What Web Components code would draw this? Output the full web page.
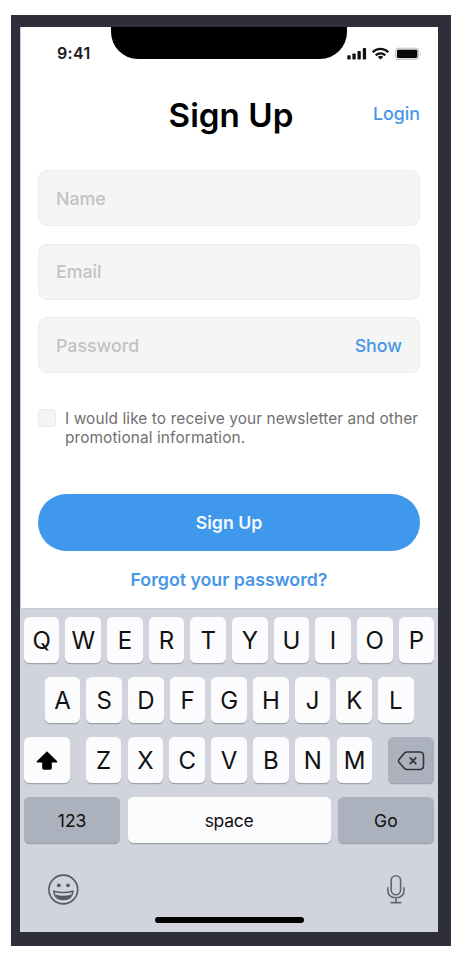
<!DOCTYPE html>
<html lang="en">
<head>
<meta charset="utf-8">
<title>Sign Up</title>
<style>
html,body{margin:0;background:#fff}
body{width:462px;height:960px;overflow:hidden;font-family:Inter,"Liberation Sans",sans-serif;color:#000}
</style>
</head>
<body>
<phone-frame>
  <status-bar time="9:41"></status-bar>
  <sign-up-form></sign-up-form>
  <key-board></key-board>
</phone-frame>
<script>
function define(name, render) {
  customElements.define(name, class extends HTMLElement {
    connectedCallback() {
      if (this.shadowRoot) return;
      this.attachShadow({ mode: 'open' }).innerHTML = '<style>*{box-sizing:border-box}</style>' + render(this);
    }
  });
}

define('phone-frame', () => `
<style>
:host{display:block;box-sizing:border-box;width:462px;height:960px;padding:15px 11.5px 14px 11px}
.bezel{height:931px;background:#2e2f3a;padding:12px 12.5px 14px 9px}
.screen{height:905px;background:#fff;display:flex;flex-direction:column;box-shadow:inset 1px 0 #c9cbd6;overflow:hidden}
</style>
<div class="bezel"><div class="screen"><slot></slot></div></div>`);

define('status-bar', el => `
<style>
:host{display:grid;grid-template-columns:91px 236px 1fr;height:60px;flex:none}
.time{font-size:16px;font-weight:600;letter-spacing:.35px;line-height:20px;padding:16px 0 0 37px;color:#1b1b1b;white-space:nowrap}
.notch{height:31.5px;background:#000;border-radius:0 0 27px 27px}
.icons{padding-top:18.5px}
svg{display:block}
</style>
<div class="time">${el.getAttribute('time')}</div>
<div class="notch"></div>
<div class="icons"><svg width="76" height="15" viewBox="0 0 76 15">
<g fill="#111"><rect x=".3" y="9.3" width="3.3" height="4.3" rx=".8"/><rect x="5.4" y="7.5" width="3.3" height="6.1" rx=".8"/><rect x="10.5" y="5" width="3.3" height="8.6" rx=".8"/><rect x="15.8" y="2" width="3.3" height="11.6" rx=".8"/></g>
<g fill="none" stroke="#111" stroke-width="2.2"><path d="M25.7 6.200a11 11 0 0 1 15.600 0"/><path d="M28.700 9.400a6.800 6.800 0 0 1 9.600 0"/></g>
<path d="M33.500 13.600 30.800 11a3.900 3.900 0 0 1 5.400 0z" fill="#111"/>
<rect x="48.600" y="2.200" width="23" height="11.200" rx="2.600" fill="#e4e4e4" stroke="#c2c2c2"/>
<rect x="50" y="3.800" width="20.300" height="8.200" rx="1.400" fill="#080808"/>
<path d="M73 6v3.800q1.700-1.900 0-3.800" fill="#aaa"/>
</svg></div>`);

define('text-field', el => `
<style>
:host{display:flex;box-sizing:border-box;align-items:center;justify-content:space-between;height:56px;border:1.4px solid #ececec;border-radius:9px;background:#f5f5f5;padding:1.5px 17px 0;font-size:17.8px;font-weight:500;line-height:22px}
.ph{color:#c2c2c2}
::slotted(*){color:#4896e6}
</style>
<span class="ph">${el.getAttribute('placeholder')}</span><slot></slot>`);

define('check-option', () => `
<style>
:host{display:flex;gap:9px;font-size:15.4px;letter-spacing:.11px;line-height:19px;color:#707070}
i{flex:none;width:18px;height:18px;border:1px solid #ebebeb;border-radius:4px;background:#f5f5f5}
span{white-space:nowrap}
</style>
<i></i><span><slot></slot></span>`);

define('pill-button', () => `
<style>
:host{display:flex;align-items:center;justify-content:center;height:57px;border-radius:29px;background:#4098ec;color:#f4f9ff;font-size:17.7px;font-weight:600}
</style>
<slot></slot>`);

define('sign-up-form', () => `
<style>
:host{display:flex;flex-direction:column;height:520.5px;flex:none;padding:0 18px}
header{display:grid;grid-template-columns:1fr auto 1fr;height:83px;padding-top:7px}
h1{grid-column:2;margin:0;padding-left:4px;font-size:33.2px;font-weight:600;line-height:42px;white-space:nowrap}
a{color:#4896e6}
header a{justify-self:end;font-size:17.8px;font-weight:500;line-height:40px}
.fields{display:flex;flex-direction:column;gap:17.7px}
check-option{margin-top:35.5px}
pill-button{margin-top:47px}
.forgot{text-align:center;margin-top:18px;font-size:17.75px;line-height:22px;font-weight:600}
</style>
<header><h1>Sign Up</h1><a>Login</a></header>
<div class="fields">
<text-field placeholder="Name"></text-field>
<text-field placeholder="Email"></text-field>
<text-field placeholder="Password"><a>Show</a></text-field>
</div>
<check-option>I would like to receive your newsletter and other<br>promotional information.</check-option>
<pill-button>Sign Up</pill-button>
<a class="forgot">Forgot your password?</a>`);

define('key-cap', () => `
<style>
:host{display:flex;box-sizing:border-box;align-items:center;justify-content:center;height:46px;padding-top:2px;border-radius:5.5px;background:#fcfcfe;box-shadow:0 1.3px 0 #a0a2a9;font-size:24px;line-height:28px;color:#111;flex:0 0 35.6px}
:host([wide]){font-size:17.5px}
:host([wide]:not([dark])){letter-spacing:-.3px}
:host([dark]){background:#abb2bd}
::slotted(svg){display:block}
</style>
<slot></slot>`);

const keys = s => [...s].map(c => `<key-cap>${c}</key-cap>`).join('');
define('key-board', () => `
<style>
:host{display:flex;flex-direction:column;flex:1;background:#d1d4dd;padding:9.5px 3.8px 0 3.8px;box-shadow:inset 0 1px #c8cad3}
.row{display:flex;justify-content:space-between;height:60px}
.mid{padding:0 20.5px 0 21px}
.letters{display:flex;gap:6.25px}
.side{flex-basis:46.5px}
.fn{flex-basis:96.7px}
.space{flex-basis:203px}
.tools{display:flex;justify-content:space-between;padding:16px 28px 0 24px}
.home{width:149px;height:6px;border-radius:3px;background:#000;margin:11.5px 0 0 131px}
svg{display:block}
</style>
<div class="row">${keys('QWERTYUIOP')}</div>
<div class="row mid">${keys('ASDFGHJKL')}</div>
<div class="row"><key-cap class="side"><svg width="24" height="22" viewBox="0 0 24 22"><path d="M12 1.3 22.2 11.2q.7 1-.5 1.2H16.8V18q0 1.7-1.6 1.7H8.8Q7.2 19.7 7.2 18V12.400H2.300q-1.200-.2-.5-1.200z" fill="#000"/></svg></key-cap>
<div class="letters">${keys('ZXCVBNM')}</div>
<key-cap class="side" dark><svg width="28" height="22" viewBox="0 0 28 22"><path d="M10 2H22.600Q26.500 2 26.500 6V15.500Q26.500 19.500 22.600 19.500H10Q8.500 19.500 7.500 18.500L2 12.200Q1 10.800 2 9.400L7.500 3.100Q8.500 2 10 2Z" fill="none" stroke="#30343b" stroke-width="1.600"/><path d="M12.700 7.400 19.300 14.200M19.300 7.400 12.700 14.200" stroke="#30343b" stroke-width="1.700"/></svg></key-cap></div>
<div class="row"><key-cap class="fn" wide dark>123</key-cap><key-cap class="space" wide>space</key-cap><key-cap class="fn" wide dark>Go</key-cap></div>
<div class="tools">
<svg width="32" height="32" viewBox="0 0 32 32"><circle cx="15.300" cy="16.500" r="14.400" fill="none" stroke="#555961" stroke-width="1.600"/><circle cx="10.800" cy="12.300" r="1.900" fill="#555961"/><circle cx="20" cy="12.300" r="1.900" fill="#555961"/><path d="M5.800 18.200Q15.300 20.600 24.900 18.200Q24.200 26.600 15.300 26.600T5.800 18.200Z" fill="none" stroke="#555961" stroke-width="1.500"/><path d="M7.200 21.600Q15.300 24 23.500 21.600Q21.200 26.600 15.300 26.600T7.200 21.600Z" fill="#555961"/></svg>
<svg width="20" height="32" viewBox="0 0 20 32"><g fill="none" stroke="#62666f" stroke-width="1.600"><rect x="5.200" y="2.800" width="9.400" height="19" rx="4.700"/><path d="M1.800 14.300V17Q1.800 24.800 9.900 24.800T18 17V14.300M9.900 24.800V29.500M4.500 29.600H15.300"/></g></svg>
</div>
<div class="home"></div>`);
</script>
</body>
</html>
